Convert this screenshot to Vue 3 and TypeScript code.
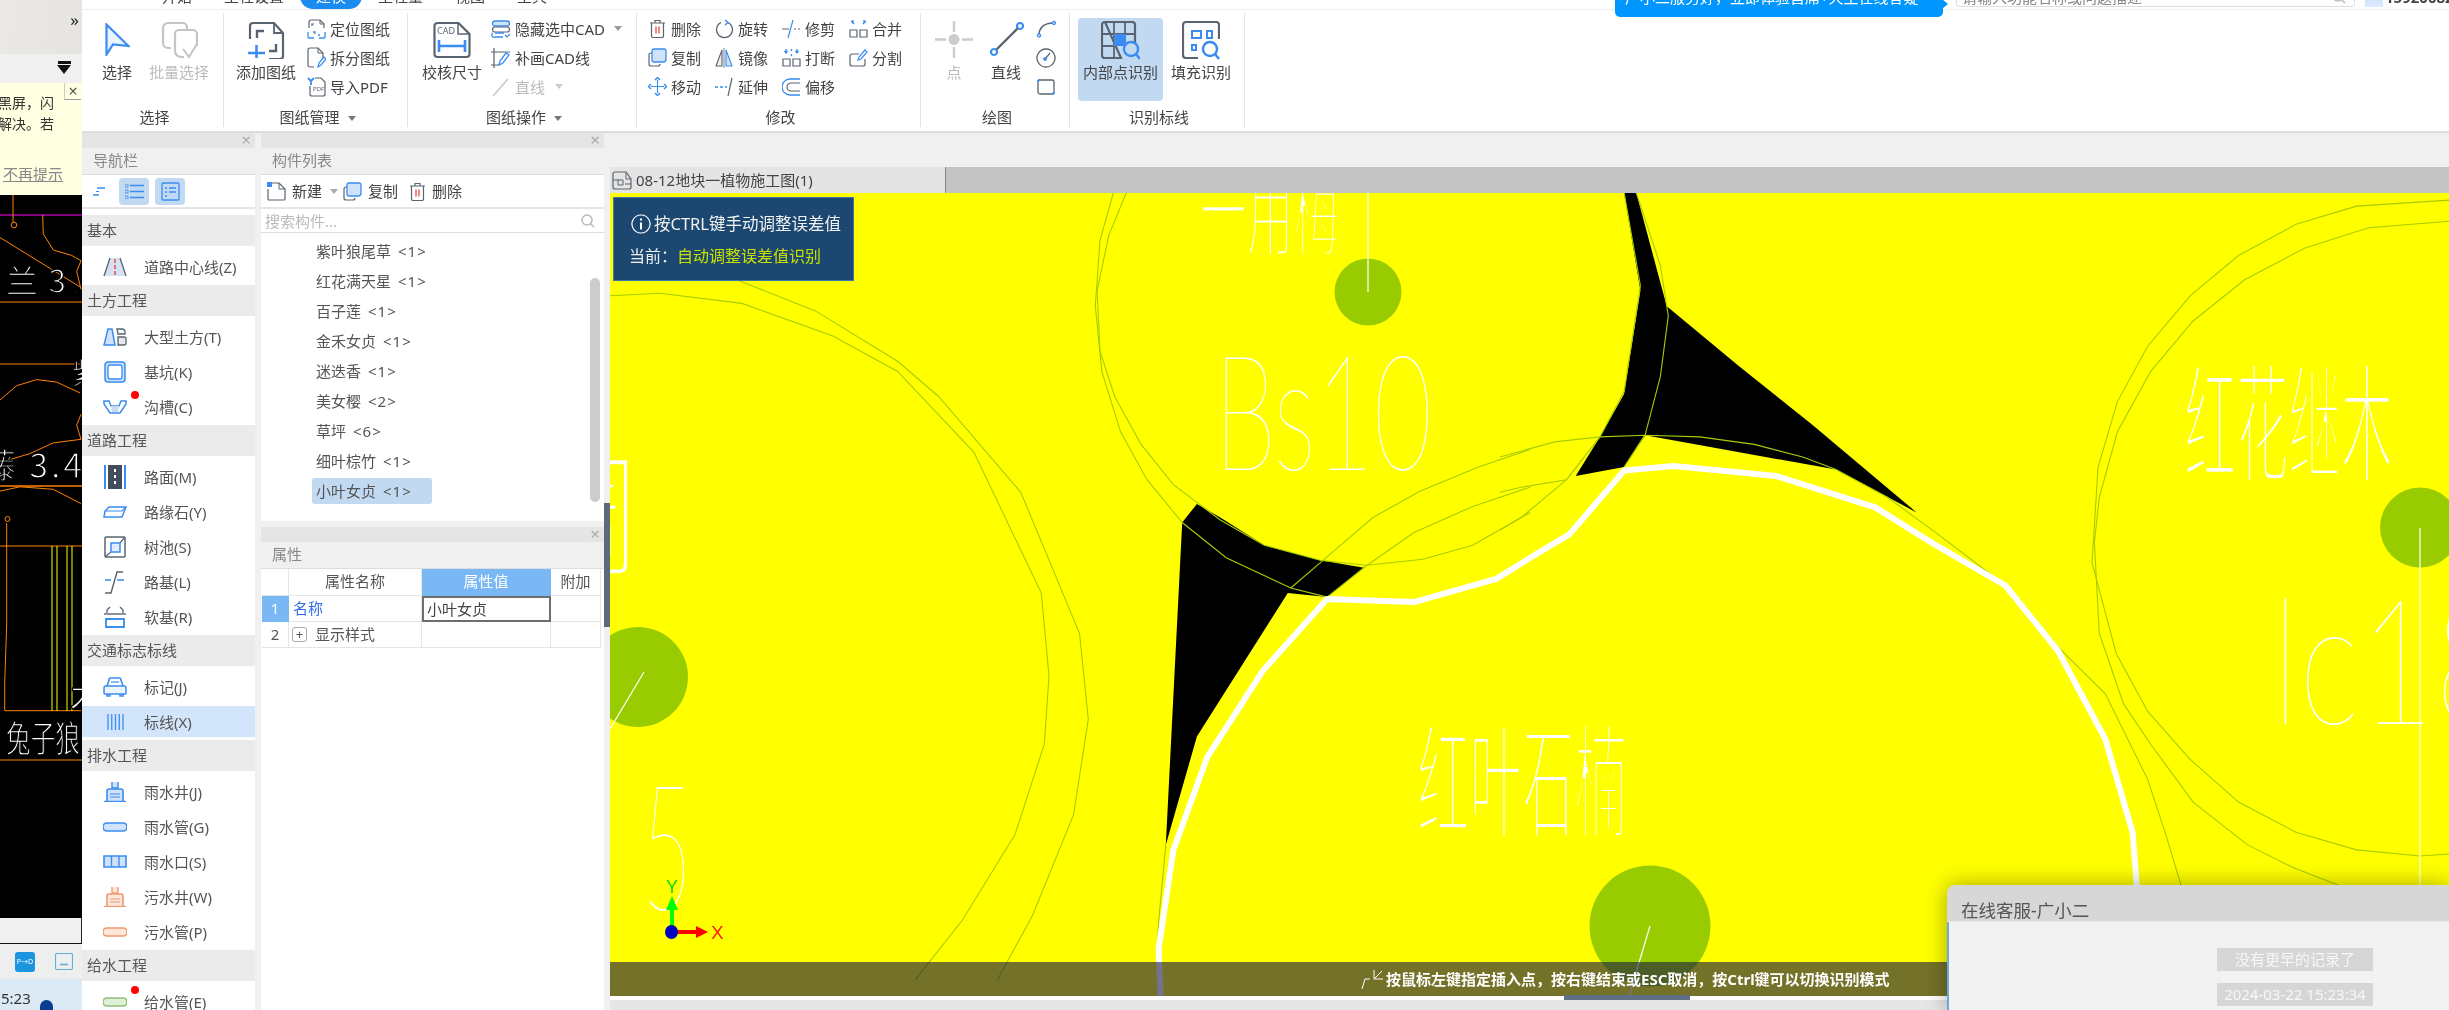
<script setup lang="ts">
import { h } from 'vue'

type Part = { d?: string; s?: string; f?: string; w?: number; t?: string; x?: number; y?: number; z?: number }
type Icon = { w: number; h: number; p: Part[] }

const B = '#3b8cf0'
const D = '#5a6470'
const L = '#cfe2fa'
const R = '#e8584a'
const O = '#ee9a72'
const GN = '#8fc07a'
const GY = '#c4c4c4'

const well = (c: string, fill: string): Icon => ({ w: 24, h: 20, p: [
  { d: 'M9 0v6h6V0', s: c, f: fill, w: 1.4 },
  { d: 'M4 19V9a2 2 0 0 1 2-2h12a2 2 0 0 1 2 2v10', s: c, f: fill, w: 1.6 },
  { d: 'M7 12h10M7 15h10', s: c, w: 1.2 },
  { d: 'M1 19.5h22', s: c, w: 1.4 },
] })
const pipe = (c: string, fill: string): Icon => ({ w: 24, h: 10, p: [
  { d: 'M4 1h16a3.500 3.500 0 0 1 0 8H4a3.500 3.500 0 0 1 0-8z', s: c, f: fill, w: 1.6 },
] })

const icons: Record<string, Icon> = {
  select: { w: 25, h: 33, p: [{ d: 'M1.500 1.500L23.500 23L8 21.500L1.500 31.500Z', s: B, f: '#eaf3fe', w: 2.2 }] },
  batch: { w: 37, h: 38, p: [
    { d: 'M10 27H7a5 5 0 0 1-5-5V7a5 5 0 0 1 5-5h15a4 4 0 0 1 4 4v3', s: GY, w: 2.2 },
    { d: 'M14 30V13a4 4 0 0 1 4-4h14a4 4 0 0 1 4 4v12', s: GY, w: 2.2 },
    { d: 'M14 30a6 6 0 0 0 6 6h3', s: GY, w: 2.2 },
    { d: 'M22 28l6 8 8-13', s: GY, w: 2 },
  ] },
  add: { w: 38, h: 38, p: [
    { d: 'M3 18V5a3 3 0 0 1 3-3h21l9 10v23a3 3 0 0 1-3 3H22', s: D, w: 2.2 },
    { d: 'M27 2v10h9', s: D, w: 1.8 },
    { d: 'M10 17V10h7M29 23v7h-7', s: D, w: 2.4 },
    { d: 'M1 32H18M9.500 24v13', s: B, w: 2.6 },
  ] },
  cad: { w: 38, h: 38, p: [
    { d: 'M1.500 33V5a3 3 0 0 1 3-3h21l11 11v20a3 3 0 0 1-3 3h-29a3 3 0 0 1-3-3z', s: D, w: 2.2 },
    { d: 'M25 2v11h11', s: D, w: 1.5 },
    { t: 'CAD', x: 4, y: 13, z: 9, f: '#5a6470' },
    { d: 'M6 19v12M32 19v12M6 25h26', s: B, w: 2.6 },
  ] },
  loc: { w: 19, h: 20, p: [
    { d: 'M2 9V3a2 2 0 0 1 2-2h9l4 4v4', s: D, w: 1.2 },
    { d: 'M13 1v4h4', s: D, w: 1 },
    { d: 'M7 5H5v2M15 11', s: D, w: 1.2 },
    { d: 'M1 13v5a1 1 0 0 0 1 1h5M18 13v5a1 1 0 0 1-1 1h-5M6 13h2v2M13 16h-2', s: B, w: 1.3 },
  ] },
  split: { w: 19, h: 21, p: [
    { d: 'M7 20H3a2 2 0 0 1-2-2V3a2 2 0 0 1 2-2h8l5 5v5', s: D, w: 1.2 },
    { d: 'M11 1v5h5', s: D, w: 1 },
    { d: 'M11 20l1-4 5-6 2 2-5 6z', s: B, w: 1.2 },
  ] },
  pdf: { w: 19, h: 20, p: [
    { d: 'M3 9v8a2 2 0 0 0 2 2h11a2 2 0 0 0 2-2V5l-4-4H8', s: D, w: 1.2 },
    { d: 'M1 1l3 3M7 1L4 4M4 4v4', s: B, w: 1.8 },
    { t: 'PDF', x: 6, y: 13.500, z: 6, f: '#5a6470' },
  ] },
  hide: { w: 20, h: 18, p: [
    { d: 'M4 1h12a2 2 0 0 1 0 5H4a2 2 0 0 1 0-5z', s: B, f: L, w: 1.3 },
    { d: 'M4 7h12a2 2 0 0 1 0 5H4a2 2 0 0 1 0-5z', s: D, w: 1.2 },
    { d: 'M4 13h9M2 13a2 2 0 0 0 2 4h8', s: B, w: 1.3 },
    { d: 'M14 15l2 2 3-3', s: B, w: 1.2 },
  ] },
  patch: { w: 20, h: 20, p: [
    { d: 'M0 4h19M3 0v20M0 17h8', s: D, w: 1.2 },
    { d: 'M8 17l1-4 6-8 3 2-6 8z', s: B, w: 1.3 },
  ] },
  line0: { w: 18, h: 20, p: [{ d: 'M1 19L16 2', s: '#ccc', w: 1.8 }] },
  del: { w: 17, h: 19, p: [
    { d: 'M1 4h15M6 4V1.500h5V4', s: D, w: 1.2 },
    { d: 'M2.500 4v13a1.500 1.500 0 0 0 1.500 1.500h9a1.500 1.500 0 0 0 1.500-1.500V4', s: D, w: 1.2 },
    { d: 'M7 7.500v7M10 7.500v7', s: R, w: 1.4 },
  ] },
  copy: { w: 19, h: 19, p: [
    { d: 'M4 5H3a2 2 0 0 0-2 2v9a2 2 0 0 0 2 2h7a2 2 0 0 0 2-2', s: D, w: 1.2 },
    { d: 'M6 1h10a2 2 0 0 1 2 2v8a3 3 0 0 1-3 3H6a2 2 0 0 1-2-2V3a2 2 0 0 1 2-2z', s: B, f: L, w: 1.3 },
  ] },
  move: { w: 19, h: 19, p: [
    { d: 'M9.500 3v13M3 9.500h13', s: B, w: 1.1 },
    { d: 'M7 3l2.500-2.500L12 3M7 16l2.500 2.500L12 16M3 7L.5 9.500 3 12M16 7l2.500 2.500L16 12', s: B, w: 1.5 },
  ] },
  rotate: { w: 19, h: 20, p: [
    { d: 'M6 3.500A8 8 0 1 0 13 3.500', s: D, w: 1.2 },
    { d: 'M10 1l3 2.500-3 2.500', s: B, w: 1.4 },
  ] },
  mirror: { w: 18, h: 20, p: [
    { d: 'M7 2L1 18h6z', s: D, f: '#eee', w: 1.1 },
    { d: 'M11 2l6 16h-6z', s: B, f: L, w: 1.1 },
    { d: 'M9 0v20', s: D, w: .8 },
  ] },
  extend: { w: 19, h: 20, p: [
    { d: 'M0 10h3M5 10h3M10 10h2', s: B, w: 1.3 },
    { d: 'M17 1L13 19', s: D, w: 1.2 },
  ] },
  trim: { w: 19, h: 20, p: [
    { d: 'M0 10h7M12 10h2M16 10h2', s: D, w: 1.2 },
    { d: 'M11 1L6 19', s: B, w: 1.2 },
  ] },
  breakI: { w: 19, h: 19, p: [
    { d: 'M1 11h7v7H1zM11 11h7v7h-7z', s: D, w: 1.2 },
    { d: 'M4 1v3M2.500 3l1.500 2 1.500-2M15 1v3M13.500 3l1.500 2 1.500-2M9.500 1v2M9.500 6v2', s: B, w: 1.3 },
  ] },
  offset: { w: 19, h: 18, p: [
    { d: 'M18 1H8a8 8 0 0 0 0 16h10', s: B, w: 1.3 },
    { d: 'M18 5H9a4 4 0 0 0 0 8h9', s: D, w: 1.2 },
  ] },
  merge: { w: 19, h: 19, p: [
    { d: 'M1 11h7v7H1zM11 11h7v7h-7z', s: D, w: 1.2 },
    { d: 'M4 1v3M3 3l2 2M15 1v3M16 3l-2 2M3 5M2 2l2 2M17 2l-2 2', s: B, w: 1.4 },
  ] },
  divide: { w: 19, h: 18, p: [
    { d: 'M10 5H3a2 2 0 0 0-2 2v8a2 2 0 0 0 2 2h11a2 2 0 0 0 2-2v-5', s: D, w: 1.2 },
    { d: 'M9 11l1-3 6-7 2 2-6 7z', s: B, w: 1.2 },
  ] },
  point: { w: 38, h: 37, p: [
    { d: 'M19 0v11M19 26v11M0 18.500h11M27 18.500h11', s: '#ccc', w: 2.4 },
    { d: 'M19 13a5.500 5.500 0 1 0 .01 0z', f: '#ccc' },
  ] },
  line: { w: 35, h: 35, p: [
    { d: 'M5 30L31 4', s: D, w: 2.4 },
    { d: 'M5 27a3 3 0 1 0 .01 0zM31 1a3 3 0 1 0 .01 0z', s: B, f: '#fff', w: 2.2 },
  ] },
  arc: { w: 20, h: 18, p: [
    { d: 'M3 15C3 8 8 3 17 3', s: D, w: 1.4 },
    { d: 'M3 14a1.500 1.500 0 1 0 .01 0zM18 1.500a1.500 1.500 0 1 0 .01 0z', s: B, f: '#fff', w: 1.4 },
  ] },
  gauge: { w: 20, h: 20, p: [
    { d: 'M10 1a9 9 0 1 0 .01 0z', s: D, w: 1.3 },
    { d: 'M9 11l5-6', s: D, w: 1.2 },
    { d: 'M9 9.500a1.500 1.500 0 1 0 .01 0z', s: B, f: B },
  ] },
  rrect: { w: 18, h: 16, p: [
    { d: 'M3 1h12a2 2 0 0 1 2 2v10a2 2 0 0 1-2 2H3a2 2 0 0 1-2-2V3a2 2 0 0 1 2-2z', s: D, w: 1.3 },
    { d: 'M1 3a2 2 0 0 1 2-2M15 15a2 2 0 0 0 2-2', s: B, w: 2 },
  ] },
  inner: { w: 39, h: 39, p: [
    { d: 'M4 1h27a3 3 0 0 1 3 3v22M20 37H4a3 3 0 0 1-3-3V4a3 3 0 0 1 3-3z', s: D, w: 2.2 },
    { d: 'M13 1v36M24 1v11M1 13h33M1 25h11', s: D, w: 1.8 },
    { d: 'M13 13h12v12H13z', f: B },
    { d: 'M30 21a7 7 0 1 0 .01 0z', s: B, f: '#c2d9f2', w: 2.4 },
    { d: 'M35 33l4 5', s: B, w: 2.6 },
  ] },
  fill: { w: 38, h: 39, p: [
    { d: 'M16 37H4a3 3 0 0 1-3-3V4a3 3 0 0 1 3-3h30a3 3 0 0 1 3 3v14', s: D, w: 2.2 },
    { d: 'M10 10h9v7h-9zM25 10h5v7h-5zM10 24h4v5h-4z', s: B, w: 2 },
    { d: 'M28 21a7 7 0 1 0 .01 0z', s: B, w: 2.4 },
    { d: 'M33 33l4 5', s: B, w: 2.6 },
  ] },
  road: { w: 24, h: 20, p: [
    { d: 'M7 1L1 19H23L17 1Z', f: '#d5e2f3' },
    { d: 'M7 1L1 19M17 1L23 19', s: D, w: 1.3 },
    { d: 'M12 2v4M12 8v4M12 14v4', s: R, w: 1.6 },
  ] },
  earth: { w: 24, h: 20, p: [
    { d: 'M5 2h4l3 16H1z', s: B, f: L, w: 1.5 },
    { d: 'M14 2h5a3 3 0 0 1 3 3v2h-7z', s: D, f: '#fff', w: 1.3 },
    { d: 'M15 10h6a2 2 0 0 1 2 2v4a2 2 0 0 1-2 2h-6z', s: D, f: '#e8e8e8', w: 1.3 },
  ] },
  pit: { w: 22, h: 22, p: [
    { d: 'M4 1h14a3 3 0 0 1 3 3v14a3 3 0 0 1-3 3H4a3 3 0 0 1-3-3V4a3 3 0 0 1 3-3z', s: B, f: L, w: 1.5 },
    { d: 'M6 4h10a2 2 0 0 1 2 2v10a2 2 0 0 1-2 2H6a2 2 0 0 1-2-2V6a2 2 0 0 1 2-2z', s: B, f: '#fff', w: 1.3 },
  ] },
  ditch: { w: 24, h: 14, p: [
    { d: 'M1 1h5l2 5h8l2-5h5v3l-6 9H7L1 4z', s: B, f: '#fff', w: 1.5 },
    { d: 'M8 6h8l-1 6H9z', f: '#c7dbf5' },
  ] },
  pave: { w: 22, h: 24, p: [
    { d: 'M1 0v24M21 0v24', s: B, w: 2 },
    { d: 'M4 0h14v24H4z', f: '#444c5c' },
    { d: 'M11 4v3M11 10v3M11 16v3', s: '#fff', w: 2 },
  ] },
  curb: { w: 24, h: 12, p: [
    { d: 'M6 1h17l-4 10H1l1-6z', s: B, f: '#fff', w: 1.5 },
    { d: 'M2 5h17l4-4', s: B, w: 1.2 },
  ] },
  tree: { w: 22, h: 24, p: [
    { d: 'M2 2h18a1 1 0 0 1 1 1v18a1 1 0 0 1-1 1H2a1 1 0 0 1-1-1V3a1 1 0 0 1 1-1z', s: D, f: '#fff', w: 1.5 },
    { d: 'M1 22l6-5M21 2l-5 6', s: D, w: 1.2 },
    { d: 'M7 8h9v9H7z', s: B, f: '#e3eefc', w: 1.5 },
  ] },
  sub: { w: 22, h: 24, p: [
    { d: 'M1 10h6M13 10h7', s: B, w: 1.4 },
    { d: 'M1 23h6l6-21h6', s: D, w: 1.4 },
  ] },
  soft: { w: 22, h: 22, p: [
    { d: 'M3 7V4l3-3M19 7V4l-3-3', s: D, w: 1.3 },
    { d: 'M0 8h22', s: D, w: 1.4 },
    { d: 'M2 13h18v8H2z', s: B, w: 1.8 },
  ] },
  car: { w: 24, h: 20, p: [
    { d: 'M4 9l2-6a2 2 0 0 1 2-2h8a2 2 0 0 1 2 2l2 6', s: B, w: 1.6 },
    { d: 'M3 9h18a2 2 0 0 1 2 2v5a1 1 0 0 1-1 1H2a1 1 0 0 1-1-1v-5a2 2 0 0 1 2-2z', s: B, f: '#eef5fe', w: 1.5 },
    { d: 'M8 5h8', s: B, w: 1.2 },
    { d: 'M4 17v2h3v-2M17 17v2h3v-2', s: B, w: 1.5 },
    { d: 'M6 12.500h.1M18 12.500h.1', s: B, w: 2.6 },
  ] },
  mark: { w: 17, h: 16, p: [{ d: 'M1 0v16M4.750 0v16M8.500 0v16M12.250 0v16M16 0v16', s: B, w: 1.3 }] },
  well: well(B, L),
  swell: well(O, '#fde6da'),
  pipe: pipe(B, L),
  spipe: pipe(O, '#fde6da'),
  gpipe: pipe(GN, '#dff0d6'),
  inlet: { w: 24, h: 13, p: [
    { d: 'M1 1h22v11H1z', s: B, f: L, w: 1.6 },
    { d: 'M8.500 1v11M16 1v11', s: B, w: 1.3 },
  ] },
  collapse: { w: 12, h: 9, p: [{ d: 'M4 1h8M0 8h6', s: B, w: 1.5 }, { d: 'M3 4.500h3', s: B, w: 1 }] },
  list: { w: 19, h: 15, p: [{ d: 'M5 1.500h14M5 7.500h14M5 13.500h14', s: B, w: 1.5 }, { d: 'M0 0h3v3H0zM0 6h3v3H0zM0 12h3v3H0z', s: B, w: .8 }] },
  form: { w: 19, h: 19, p: [
    { d: 'M2 1h15a1 1 0 0 1 1 1v15a1 1 0 0 1-1 1H2a1 1 0 0 1-1-1V2a1 1 0 0 1 1-1z', s: B, w: 1.3 },
    { d: 'M4 6h2M8 6h7M4 10h2M8 10h7M4 14h2', s: B, w: 1.4 },
  ] },
  fnew: { w: 19, h: 19, p: [
    { d: 'M5 1h7l6 6v10a1 1 0 0 1-1 1H2a1 1 0 0 1-1-1V7', s: D, w: 1.2 },
    { d: 'M12 1v6h6', s: D, w: 1 },
    { d: 'M0 0h5v5H0z', f: B },
  ] },
  doc: { w: 18, h: 17, p: [
    { d: 'M2 .5h14a1.500 1.500 0 0 1 1.500 1.500v13a1.500 1.500 0 0 1-1.500 1.500H2A1.500 1.500 0 0 1 .5 15V2A1.500 1.500 0 0 1 2 .5z', s: '#5db0d8', w: 1.2 },
    { d: 'M5 11.500h8', s: '#5db0d8', w: 1.6 },
  ] },
  tab: { w: 20, h: 19, p: [
    { d: 'M8 1H3a2 2 0 0 0-2 2v13a2 2 0 0 0 2 2h14a2 2 0 0 0 2-2V8l-5-7H8', s: D, w: 1.2 },
    { d: 'M14 1v7h5M1 9h6M13 13h6', s: D, w: 1 },
    { d: 'M6 9h5v5H6z', s: D, w: 1 },
  ] },
  mag: { w: 14, h: 14, p: [{ d: 'M6 1a5 5 0 1 0 .01 0z', s: '#bbb', w: 1.5 }, { d: 'M9.500 9.500L13 13', s: '#bbb', w: 1.5 }] },
  pin: { w: 23, h: 19, p: [
    { d: 'M9 9H4L1 19', s: '#fff', w: 1 },
    { d: 'M21 1L14 8M13 0v9h9', s: '#fff', w: 1 },
  ] },
  info: { w: 20, h: 20, p: [
    { d: 'M10 1a9 9 0 1 0 .01 0z', s: '#fff', w: 1.2 },
    { d: 'M10 8.500v7', s: '#fff', w: 2 },
    { d: 'M10 4.500v2', s: '#fff', w: 2 },
  ] },
}

const Ico = (props: { n: string }) => {
  const ic = icons[props.n]
  return h('svg', { width: ic.w, height: ic.h, viewBox: `0 0 ${ic.w} ${ic.h}`, class: 'ico' },
    ic.p.map((q) => q.t
      ? h('text', { x: q.x, y: q.y, 'font-size': q.z, fill: q.f, 'font-family': 'Noto Sans, sans-serif' }, q.t)
      : h('path', { d: q.d, stroke: q.s ?? 'none', fill: q.f ?? 'none', 'stroke-width': q.w ?? 1 })))
}
Ico.props = ['n']

const tabs = ['开始', '工程设置', '建模', '工程量', '视图', '工具']

const smallDraw = [
  { n: 'loc', t: '定位图纸' }, { n: 'split', t: '拆分图纸' }, { n: 'pdf', t: '导入PDF' },
]
const smallModify = [
  { n: 'del', t: '删除' }, { n: 'rotate', t: '旋转' }, { n: 'trim', t: '修剪' }, { n: 'merge', t: '合并' },
  { n: 'copy', t: '复制' }, { n: 'mirror', t: '镜像' }, { n: 'breakI', t: '打断' }, { n: 'divide', t: '分割' },
  { n: 'move', t: '移动' }, { n: 'extend', t: '延伸' }, { n: 'offset', t: '偏移' },
]

const nav = [
  { title: '基本', items: [{ t: '道路中心线(Z)', n: 'road' }] },
  { title: '土方工程', items: [{ t: '大型土方(T)', n: 'earth' }, { t: '基坑(K)', n: 'pit' }, { t: '沟槽(C)', n: 'ditch', dot: true }] },
  { title: '道路工程', items: [{ t: '路面(M)', n: 'pave' }, { t: '路缘石(Y)', n: 'curb' }, { t: '树池(S)', n: 'tree' }, { t: '路基(L)', n: 'sub' }, { t: '软基(R)', n: 'soft' }] },
  { title: '交通标志标线', items: [{ t: '标记(J)', n: 'car' }, { t: '标线(X)', n: 'mark', active: true }] },
  { title: '排水工程', items: [{ t: '雨水井(J)', n: 'well' }, { t: '雨水管(G)', n: 'pipe' }, { t: '雨水口(S)', n: 'inlet' }, { t: '污水井(W)', n: 'swell' }, { t: '污水管(P)', n: 'spipe' }] },
  { title: '给水工程', items: [{ t: '给水管(E)', n: 'gpipe', dot: true }] },
]

const comps = [
  ['紫叶狼尾草', '<1>'], ['红花满天星', '<1>'], ['百子莲', '<1>'], ['金禾女贞', '<1>'], ['迷迭香', '<1>'],
  ['美女樱', '<2>'], ['草坪', '<6>'], ['细叶棕竹', '<1>'], ['小叶女贞', '<1>'],
]

const conv = (s: string, ox: number, sx: number, oy: number, sy: number) =>
  s.trim().split(/\s+/).map((pr) => {
    const [x, y] = pr.split(',').map(Number)
    return `${(ox + x / sx).toFixed(1)},${(oy + y / sy).toFixed(1)}`
  }).join(' ')
const p8 = (s: string) => conv(s, 610, 1.704, 190, 1.985)
const p9 = (s: string) => conv(s, 1500, 1.652, 190, 1.985)
const p10 = (s: string) => conv(s, 0, 3, 200, 2.8)

const blackShapes = [
  p8('1000,623 975,660 947,1300 1000,1085 1155,800 1222,808 1285,750 1210,735 1115,705 1040,650'),
  p9('205,5 225,5 272,215 275,230 395,350 515,465 688,640 555,555 240,487 205,550 125,568 165,490 205,405 232,200'),
]
const greens = [
  p8('0,210 85,205 225,225 380,290 490,360 620,520 735,800 748,965 740,1100 690,1280 600,1450 520,1568'),
  p8('220,180 350,240 490,340 560,410 700,600 800,880 815,1050 790,1240 720,1440 660,1568'),
  p8('858,5 835,100 827,230 838,360 870,480 915,575 975,660 1050,730 1160,790 1222,808'),
  p8('880,5 850,90 830,200 835,320 860,410 905,505 960,585 1040,655 1115,705 1210,735 1290,745 1385,733 1470,705 1568,640'),
  p8('1160,790 1215,735 1300,650 1380,598 1480,550 1568,515'),
  p8('1222,808 1290,745 1370,680 1470,628 1568,590'),
  p8('947,1300 935,1450 933,1500'),
  p9('0,530 90,500 165,490 240,487 330,490 420,505 500,530 555,555 640,610 720,680 835,785 860,815 920,905 1000,1000 1070,1170 1100,1280 1125,1380'),
  p9('0,600 35,590 110,575 165,490 205,400 232,190 205,5'),
  p9('0,675 35,650 110,575'),
  p9('225,5 265,150 278,250 265,370 240,485 205,550'),
  p9('1568,20 1415,32 1315,68 1220,130 1140,210 1070,310 1020,420 988,550 978,740 1018,920 1070,1035 1140,1130 1220,1215 1315,1275 1415,1310 1520,1322 1568,1318'),
  p9('1568,62 1435,75 1330,115 1230,178 1145,260 1075,360 1020,480 990,610 982,700 990,880 1030,1020 1075,1100 1145,1215 1235,1300 1310,1345 1385,1380'),
]
const thick = p8('938,1600 935,1505 960,1310 1018,1125 1112,955 1222,812 1370,818 1510,772 1568,730') + ' ' +
  p9('115,683 205,557 287,548 457,568 620,630 720,705 835,785 922,915 1000,1090 1045,1275 1052,1380')

const cadOrange = [
  p10('128,42 130,95 160,140 215,155 243,170 230,200 243,250'),
  p10('0,105 243,245'),
  p10('0,560 50,520 110,503 170,510 240,540'),
  p10('243,600 230,630 243,670 160,680 90,710 0,735'),
  p10('0,815 60,803 160,810 243,850'),
  p10('20,905 20,1190 14,1350 14,1430 243,1430'),
]
</script>

<template>
  <div class="app">
    <aside class="strip">
      <div class="strip-top"><span class="chev">»</span></div>
      <div class="strip-filter"><span class="filter-bar"></span><span class="filter-tri"></span></div>
      <div class="note">
        <span class="note-x">×</span>
        <p class="note-line">黑屏，闪</p>
        <p class="note-line">解决。若</p>
        <a class="note-link">不再提示</a>
      </div>
      <svg class="cad-left" width="82" height="723" viewBox="0 195 82 723">
        <line x1="0" y1="215" x2="82" y2="215" stroke="#ff00ff" stroke-width="1.200" />
        <line x1="13" y1="195" x2="13" y2="222" stroke="#ff8000" />
        <circle cx="14" cy="225" r="2.800" fill="none" stroke="#ff8000" />
        <line x1="0" y1="302" x2="82" y2="302" stroke="#ff8000" />
        <line x1="0" y1="364" x2="82" y2="364" stroke="#ff8000" />
        <line x1="0" y1="486" x2="82" y2="486" stroke="#ff8000" stroke-width="1.300" />
        <line x1="0" y1="546" x2="82" y2="546" stroke="#ff8000" />
        <circle cx="7.500" cy="519" r="2.500" fill="none" stroke="#ff8000" />
        <polyline v-for="(o, i) in cadOrange" :key="i" :points="o" fill="none" stroke="#ff8000" />
        <line v-for="x in [52, 57, 67, 72]" :key="x" :x1="x" y1="546" :x2="x" y2="711" stroke="#ffff00" />
        <text class="cad-w" x="6" y="293" font-size="32" textLength="60" lengthAdjust="spacing">兰 3</text>
        <text class="cad-w" x="74" y="293" font-size="14">.</text>
        <text class="cad-w" x="-18" y="478" font-size="34" textLength="100" lengthAdjust="spacing">藤 3.4</text>
        <text class="cad-w" x="72" y="384" font-size="30">紫</text>
        <text class="cad-w" x="70" y="710" font-size="36">木</text>
        <text class="cad-w" x="6" y="752" font-size="36" textLength="74" lengthAdjust="spacingAndGlyphs">兔子狼</text>
        <line x1="0" y1="760" x2="82" y2="760" stroke="#ff8000" />
      </svg>
      <div class="strip-panel"></div>
      <div class="strip-tools">
        <span class="pd">P→D</span>
        <Ico n="doc" />
      </div>
      <div class="strip-status"><span>5:23</span><i class="blob"></i></div>
    </aside>

    <main class="main">
      <header class="topbar">
        <span v-for="t in tabs" :key="t" class="tab" :class="{ on: t === '建模' }">{{ t }}</span>
        <div class="top-right">
          <div class="search-top"><span>请输入功能名称或问题描述</span><Ico n="mag" /></div>
          <i class="avatar"></i>
          <b class="user">15920082</b>
        </div>
      </header>

      <section class="ribbon">
        <div class="rg rg1">
          <div class="rb">
            <div class="big"><span class="big-ic"><Ico n="select" /></span><span>选择</span></div>
            <div class="big off"><span class="big-ic"><Ico n="batch" /></span><span>批量选择</span></div>
          </div>
          <div class="rl">选择</div>
        </div>
        <div class="rg rg2">
          <div class="rb">
            <div class="big"><span class="big-ic"><Ico n="add" /></span><span>添加图纸</span></div>
            <div class="smalls">
              <div v-for="s in smallDraw" :key="s.t" class="small"><span class="s-ic"><Ico :n="s.n" /></span>{{ s.t }}</div>
            </div>
          </div>
          <div class="rl">图纸管理<i class="caret"></i></div>
        </div>
        <div class="rg rg3">
          <div class="rb">
            <div class="big"><span class="big-ic"><Ico n="cad" /></span><span>校核尺寸</span></div>
            <div class="smalls">
              <div class="small"><span class="s-ic"><Ico n="hide" /></span>隐藏选中CAD<i class="caret c2"></i></div>
              <div class="small"><span class="s-ic"><Ico n="patch" /></span>补画CAD线</div>
              <div class="small off"><span class="s-ic"><Ico n="line0" /></span>直线<i class="caret c3"></i></div>
            </div>
          </div>
          <div class="rl">图纸操作<i class="caret"></i></div>
        </div>
        <div class="rg rg4">
          <div class="rb">
            <div class="mod-grid">
              <div v-for="s in smallModify" :key="s.t" class="small"><span class="s-ic"><Ico :n="s.n" /></span>{{ s.t }}</div>
            </div>
          </div>
          <div class="rl">修改</div>
        </div>
        <div class="rg rg5">
          <div class="rb">
            <div class="big nar off"><span class="big-ic"><Ico n="point" /></span><span>点</span></div>
            <div class="big nar"><span class="big-ic"><Ico n="line" /></span><span>直线</span></div>
            <div class="ic-col">
              <span class="s-row"><Ico n="arc" /></span>
              <span class="s-row"><Ico n="gauge" /></span>
              <span class="s-row"><Ico n="rrect" /></span>
            </div>
          </div>
          <div class="rl">绘图</div>
        </div>
        <div class="rg rg6">
          <div class="rb">
            <div class="big act"><span class="big-ic"><Ico n="inner" /></span><span>内部点识别</span></div>
            <div class="big fillb"><span class="big-ic"><Ico n="fill" /></span><span>填充识别</span></div>
          </div>
          <div class="rl">识别标线</div>
        </div>
      </section>

      <section class="work">
        <nav class="panel nav">
          <div class="p-head"><span class="p-x">×</span></div>
          <div class="p-title">导航栏</div>
          <div class="nav-tools">
            <span class="nt first"><Ico n="collapse" /></span>
            <span class="nt on"><Ico n="list" /></span>
            <span class="nt on"><Ico n="form" /></span>
          </div>
          <div class="nav-scroll">
            <template v-for="g in nav" :key="g.title">
              <div class="ng">{{ g.title }}</div>
              <div class="ng-list">
                <div v-for="it in g.items" :key="it.t" class="ni" :class="{ on: it.active }">
                  <span class="ni-ic"><Ico :n="it.n" /></span>{{ it.t }}
                  <i v-if="it.dot" class="dot"></i>
                </div>
              </div>
            </template>
          </div>
        </nav>

        <div class="col2">
          <section class="panel comp">
            <div class="p-head"><span class="p-x">×</span></div>
            <div class="p-title">构件列表</div>
            <div class="comp-tools">
              <span class="ct"><Ico n="fnew" />新建<i class="caret c4"></i></span>
              <span class="ct"><Ico n="copy" />复制</span>
              <span class="ct"><Ico n="del" />删除</span>
            </div>
            <div class="comp-search"><span>搜索构件...</span><Ico n="mag" /></div>
            <div class="comp-list">
              <div v-for="c in comps" :key="c[0]" class="ci" :class="{ on: c[0] === '小叶女贞' }">{{ c[0] }}<span class="ci-n">{{ c[1] }}</span></div>
              <i class="sb"></i>
            </div>
          </section>
          <section class="panel prop">
            <div class="p-head"><span class="p-x">×</span></div>
            <div class="p-title">属性</div>
            <div class="ptable">
              <div class="c"></div>
              <div class="c mid">属性名称</div>
              <div class="c mid hl">属性值</div>
              <div class="c mid">附加</div>
              <div class="c mid hl">1</div>
              <div class="c name">名称</div>
              <div class="c val">小叶女贞</div>
              <div class="c"></div>
              <div class="c mid">2</div>
              <div class="c expand"><i class="plus">+</i>显示样式</div>
              <div class="c"></div>
              <div class="c"></div>
            </div>
          </section>
        </div>

        <div class="splitter"><i></i></div>

        <div class="stage">
          <div class="stage-band"></div>
          <div class="stage-tabs">
            <div class="stab"><Ico n="tab" /><span>08-12地块一植物施工图(1)</span></div>
          </div>
          <div class="canvas">
            <svg class="cv" width="1839" height="803" viewBox="610 193 1839 803">
              <rect x="610" y="193" width="1839" height="803" fill="#ffff00" />
              <circle cx="1368" cy="292" r="33.500" fill="#99cc00" />
              <circle cx="638" cy="677" r="50" fill="#99cc00" />
              <circle cx="1650" cy="926" r="60.500" fill="#99cc00" />
              <circle cx="2420" cy="527.500" r="40" fill="#99cc00" />
              <polygon v-for="(b, i) in blackShapes" :key="i" :points="b" fill="#000" />
              <polyline v-for="(g, i) in greens" :key="'g' + i" :points="g" fill="none" stroke="#a6cc00" stroke-width="1.100" />
              <polyline :points="thick" fill="none" stroke="#fff" stroke-width="6" stroke-linejoin="round" />
              <g stroke="#fff" stroke-width="1.200">
                <line x1="1368" y1="193" x2="1368" y2="292" />
                <line x1="644" y1="672" x2="610" y2="729" />
                <line x1="1650" y1="926" x2="1629" y2="996" />
                <line x1="2420" y1="528" x2="2420" y2="885" />
              </g>
              <text class="lat" x="1214" y="470" font-size="160" textLength="218" lengthAdjust="spacingAndGlyphs">Bs10</text>
              <text class="lat" x="642" y="910" font-size="175" textLength="50" lengthAdjust="spacingAndGlyphs">5</text>
              <text class="lat" x="2272" y="724" font-size="175" textLength="238" lengthAdjust="spacingAndGlyphs">lc18</text>
              <text class="cad-y e36" x="1200" y="248" font-size="100" textLength="140" lengthAdjust="spacingAndGlyphs">一用梅</text>
              <text class="cad-y e43" x="548" y="565" font-size="135" textLength="92" lengthAdjust="spacingAndGlyphs">周</text>
              <text class="cad-y e46" x="1417" y="828" font-size="125" textLength="210" lengthAdjust="spacingAndGlyphs">红叶石楠</text>
              <text class="cad-y e46" x="2184" y="472" font-size="130" textLength="209" lengthAdjust="spacingAndGlyphs">红花继木</text>
              <g>
                <line x1="672" y1="932" x2="672" y2="905" stroke="#00ff00" stroke-width="4" />
                <polygon points="672,896 666,910 678,910" fill="#00ff00" />
                <line x1="672" y1="932" x2="698" y2="932" stroke="#ff0000" stroke-width="4" />
                <polygon points="708,932 696,926 696,938" fill="#ff0000" />
                <ellipse cx="671.500" cy="932" rx="6.500" ry="7" fill="#0000c0" />
                <text x="666" y="893" font-size="18" fill="#00e000" class="axis">Y</text>
                <text x="711" y="939" font-size="19" fill="#ff2000" class="axis">X</text>
              </g>
            </svg>
            <div class="tip">
              <div class="tip-1"><Ico n="info" /><span>按CTRL键手动调整误差值</span></div>
              <div class="tip-2">当前：<em>自动调整误差值识别</em></div>
            </div>
            <div class="hint"><Ico n="pin" /><span>按鼠标左键指定插入点，按右键结束或ESC取消，按Ctrl键可以切换识别模式</span></div>
          </div>
          <div class="gutter"></div>
          <div class="hscroll"><i class="thumb"></i></div>
        </div>
      </section>
    </main>

    <div class="bubble">广小二服务好，立即体验首席+天王在线答疑</div>

    <aside class="chat">
      <div class="chat-title">在线客服-广小二</div>
      <div class="chat-body">
        <span class="pill">没有更早的记录了</span>
        <span class="pill">2024-03-22 15:23:34</span>
      </div>
    </aside>
  </div>
</template>

<style>
html, body { margin: 0; overflow: hidden; background: #fff; }
</style>

<style scoped>
.app {
  position: relative;
  width: 2449px;
  height: 1010px;
  display: flex;
  overflow: hidden;
  background: #fff;
  color: #555;
  font-family: "Noto Sans", "Noto Sans CJK SC", sans-serif;
  font-size: 15px;
  line-height: 20px;
  filter: blur(0.45px);
}
.ico { display: block; flex: none; }
p { margin: 0; }
i, em { font-style: normal; }

.strip { width: 82px; flex: none; display: flex; flex-direction: column; background: #000; }
.strip-top { height: 54px; background: linear-gradient(100deg, #ebe9e5, #e6e4e0); position: relative; }
.chev { position: absolute; right: 3px; top: 10px; color: #222; font-size: 17px; }
.strip-filter { height: 29px; background: #f0f0f0; display: flex; flex-direction: column; align-items: flex-end; padding: 7px 11px 0 0; box-sizing: border-box; }
.filter-bar { width: 13px; height: 3px; background: #111; margin-bottom: 1px; }
.filter-tri { width: 0; height: 0; border-left: 7px solid transparent; border-right: 7px solid transparent; border-top: 9px solid #111; }
.note { height: 112px; box-sizing: border-box; background: #ffffe1; position: relative; display: flex; flex-direction: column; align-items: flex-end; padding: 9px 28px 0 0; overflow: hidden; color: #333; font-size: 14px; line-height: 21px; }
.note-line { white-space: nowrap; }
.note-x { position: absolute; top: 0; right: 1px; width: 16px; height: 16px; border-left: 1px solid #ccc; border-bottom: 1px solid #999; text-align: center; line-height: 17px; color: #555; font-size: 16px; }
.note-link { align-self: flex-start; margin: 30px 0 0 3px; color: #888; text-decoration: underline; font-size: 15px; white-space: nowrap; }
.cad-left { display: block; background: #000; flex: none; }
.cad-w { fill: #fff; font-family: "Noto Sans CJK SC", sans-serif; stroke: #000; stroke-width: 1.300px; }
.strip-panel { height: 26px; background: #f0f0f0; border-right: 1px solid #222; border-bottom: 1px solid #111; box-sizing: border-box; }
.strip-tools { height: 35px; background: #eee; display: flex; align-items: center; gap: 20px; padding-left: 15px; }
.pd { width: 20px; height: 20px; border-radius: 3px; background: #1b95e0; color: #fff; font-size: 7px; line-height: 20px; text-align: center; white-space: nowrap; }
.strip-status { flex: 1; background: #dceaf5; position: relative; color: #333; padding: 9px 0 0 1px; line-height: 20px; font-size: 15px; }
.blob { position: absolute; left: 40px; top: 21px; width: 13px; height: 16px; border-radius: 7px 7px 0 0; background: #0b3d8e; }

.main { flex: 1; min-width: 0; display: flex; flex-direction: column; }
.topbar { height: 10px; flex: none; box-sizing: border-box; border-bottom: 1px solid #eee; display: flex; align-items: flex-end; padding-left: 64px; overflow: hidden; }
.tab { height: 26px; flex: none; line-height: 26px; padding: 0 16px; border-radius: 13px; color: #444; }
.tab.on { background: #1a8cf0; color: #fff; }
.top-right { margin-left: auto; display: flex; align-items: flex-end; flex: none; }
.search-top { width: 399px; height: 20px; box-sizing: border-box; border: 1px solid #ddd; border-radius: 3px; margin: 0 10px 2px 0; display: flex; justify-content: space-between; align-items: center; padding: 0 8px 0 5px; color: #888; font-size: 15px; }
.avatar { width: 18px; height: 22px; margin: 0 2px 2px 0; background: linear-gradient(180deg, #bcdcff, #dbeaff); }
.user { height: 24px; line-height: 24px; color: #444; font-size: 15px; width: 64px; overflow: hidden; }

.bubble { position: absolute; left: 1615px; top: -10px; width: 328px; height: 27px; box-sizing: border-box; padding-left: 10px; line-height: 14px; border-radius: 5px; background: #0096ff; color: #fff; font-size: 15px; white-space: nowrap; }
.bubble::after { content: ""; position: absolute; right: -5px; top: 9px; border-left: 6px solid #0096ff; border-top: 5px solid transparent; border-bottom: 5px solid transparent; }

.ribbon { height: 123px; flex: none; box-sizing: border-box; display: flex; border-bottom: 2px solid #ddd; }
.rg { height: 114px; margin-top: 3px; box-sizing: border-box; border-right: 1px solid #e3e3e3; display: flex; flex-direction: column; }
.rg1 { width: 142px; }
.rg2 { width: 184px; }
.rg3 { width: 229px; }
.rg4 { width: 284px; }
.rg5 { width: 149px; }
.rg6 { width: 175px; }
.rb { flex: 1; display: flex; min-height: 0; }
.rl { height: 20px; flex: none; text-align: center; padding-left: 4px; color: #444; line-height: 20px; white-space: nowrap; }
.rg1 .rb { padding-left: 4px; }
.rg2 .rb { padding-left: 11px; gap: 10px; }
.rg3 .rb { padding-left: 13px; gap: 9px; }
.rg4 .rb { padding-left: 11px; }
.rg5 .rb { padding-left: 7px; }
.rg6 .rb { padding-left: 8px; gap: 8px; }
.big { width: 62px; flex: none; display: flex; flex-direction: column; align-items: center; color: #444; white-space: nowrap; }
.big-ic { height: 45px; flex: none; margin-top: 4px; display: flex; align-items: center; justify-content: center; }
.big.off { color: #bbb; }
.big.nar { width: 52px; }
.big.act { width: 85px; height: 83px; margin-top: 5px; background: #c2d9f2; border-radius: 4px; }
.big.act .big-ic { margin-top: 0; height: 44px; }
.big.fillb { width: 60px; }
.big.fillb .big-ic { margin-top: 5px; height: 44px; }
.smalls { margin-top: 1px; display: flex; flex-direction: column; }
.small { height: 29px; display: flex; align-items: center; color: #444; white-space: nowrap; }
.small.off { color: #bbb; }
.s-ic { width: 18px; flex: none; margin-right: 5px; display: flex; justify-content: center; }
.mod-grid { margin-top: 1px; display: grid; grid-template-columns: repeat(4, 67px); grid-auto-rows: 29px; }
.ic-col { margin: 1px 0 0 4px; display: flex; flex-direction: column; }
.s-row { height: 29px; display: flex; align-items: center; justify-content: center; width: 20px; }
.caret { display: inline-block; width: 0; height: 0; margin-left: 8px; vertical-align: 2px; border-left: 4.500px solid transparent; border-right: 4.500px solid transparent; border-top: 5px solid #777; }
.c2 { margin-left: 9px; border-top-color: #999; }
.c3 { margin-left: 10px; border-top-color: #ccc; }
.c4 { margin-left: 2px; border-top-color: #aaa; }

.work { flex: 1; min-height: 0; display: flex; background: #f0f0f0; }
.panel { background: #fff; display: flex; flex-direction: column; overflow: hidden; }
.p-head { height: 15px; flex: none; background: #e5e5e5; position: relative; }
.p-x { position: absolute; right: 4px; top: -3px; color: #aaa; font-size: 17px; line-height: 20px; }
.p-title { height: 27px; flex: none; box-sizing: border-box; background: #f0f0f0; border-bottom: 1px solid #ddd; color: #888; padding-left: 11px; line-height: 25px; }
.nav { width: 173px; flex: none; margin-right: 6px; }
.nav-tools { height: 34px; flex: none; box-sizing: border-box; border-bottom: 2px solid #e5e5e5; display: flex; align-items: center; padding-left: 11px; }
.nt { display: flex; align-items: center; justify-content: center; }
.nt.first { width: 12px; margin-right: 14px; }
.nt.on { width: 30px; height: 27px; background: #c2d9f2; border-radius: 4px; margin-right: 6px; }
.nav-scroll { padding-top: 6px; }
.ng { height: 31px; background: #ebebeb; padding-left: 5px; line-height: 31px; color: #555; }
.ng-list { padding: 5px 0 3px; display: flex; flex-direction: column; gap: 4px; }
.ni { position: relative; height: 31px; display: flex; align-items: center; white-space: nowrap; }
.ni.on { background: #d2e5fb; }
.ni-ic { width: 24px; flex: none; margin: 0 17px 0 21px; display: flex; justify-content: center; }
.dot { position: absolute; left: 49px; top: 0; width: 8px; height: 8px; border-radius: 50%; background: #f00; }

.col2 { width: 343px; flex: none; display: flex; flex-direction: column; gap: 6px; }
.comp { height: 388px; flex: none; }
.comp-tools { height: 34px; flex: none; box-sizing: border-box; border-bottom: 2px solid #e5e5e5; display: flex; align-items: center; padding-left: 6px; gap: 24px; }
.ct { display: flex; align-items: center; gap: 6px; color: #444; }
.ct:nth-child(2) { margin-left: -19px; }
.ct:nth-child(3) { margin-left: -13px; }
.comp-search { height: 24px; flex: none; box-sizing: border-box; border-bottom: 1px solid #ddd; display: flex; justify-content: space-between; align-items: center; padding: 0 9px 0 4px; color: #bbb; }
.comp-list { position: relative; flex: 1; padding-top: 5px; }
.ci { height: 26px; margin: 0 0 4px 51px; width: 120px; box-sizing: border-box; padding-left: 4px; line-height: 26px; border-radius: 3px; white-space: nowrap; color: #555; }
.ci.on { background: #c2d9f2; }
.ci-n { margin-left: 7px; letter-spacing: 1px; }
.sb { position: absolute; left: 329px; top: 45px; width: 10px; height: 224px; border-radius: 5px; background: #ccc; }
.prop { flex: 1; min-height: 0; }
.ptable { display: grid; grid-template-columns: 27px 133px 129px 50px; grid-template-rows: 27px 26px 26px; margin-left: 1px; }
.c { box-sizing: border-box; border-right: 1px solid #e5e5e5; border-bottom: 1px solid #e5e5e5; line-height: 25px; white-space: nowrap; color: #555; }
.mid { text-align: center; }
.hl { background: #7ab8f5; color: #fff; border-color: #7ab8f5; }
.name { color: #2f6fe0; padding-left: 4px; }
.val { border: 2px solid #6e6e6e; padding-left: 3px; line-height: 22px; color: #444; }
.expand { display: flex; align-items: center; padding-left: 3px; }
.plus { width: 15px; height: 15px; box-sizing: border-box; border: 1px solid #aaa; border-radius: 3px; margin-right: 8px; text-align: center; line-height: 12px; font-size: 13px; color: #555; }

.splitter { width: 6px; flex: none; background: #f0f0f0; }
.splitter i { display: block; margin-top: 370px; height: 124px; background: #5c6b7a; }

.stage { flex: 1; min-width: 0; display: flex; flex-direction: column; }
.stage-band { height: 34px; flex: none; background: #f0f0f0; }
.stage-tabs { height: 26px; flex: none; background: #c4c4c4; display: flex; }
.stab { width: 336px; box-sizing: border-box; background: #e4e4e4; border-right: 1px solid #888; display: flex; align-items: center; padding-left: 2px; gap: 4px; color: #444; white-space: nowrap; }
.canvas { position: relative; height: 803px; flex: none; overflow: hidden; }
.cv { display: block; }
.cad-y { fill: #fff; stroke: #ffff00; font-family: "Noto Sans CJK SC", sans-serif; }
.e36 { stroke-width: 5px; }
.e43 { stroke-width: 5.500px; }
.e46 { stroke-width: 6.200px; }
.lat { fill: #fff; font-family: Lato, "Liberation Sans", sans-serif; font-weight: 100; }
.axis { font-family: "Liberation Sans", sans-serif; }
.tip { position: absolute; left: 3px; top: 4px; width: 241px; height: 84px; box-sizing: border-box; background: #1c4770; border: 1px solid #3a7ab0; color: #fff; padding: 16px 0 0 17px; font-size: 16px; }
.tip-1 { display: flex; align-items: center; gap: 3px; white-space: nowrap; color: #f2f2f2; font-size: 16.500px; }
.tip-2 { margin: 12px 0 0 -2px; white-space: nowrap; color: #eee; }
.tip-2 em { color: #c8e000; }
.hint { position: absolute; left: 0; right: 0; bottom: 0; height: 34px; background: rgba(23, 20, 67, 0.6); display: flex; align-items: center; padding-left: 751px; gap: 2px; color: #fff; font-size: 15px; font-weight: 700; white-space: nowrap; }
.gutter { height: 4px; flex: none; background: #fff; position: relative; }
.hscroll { flex: 1; background: #e6e6e6; position: relative; }
.thumb { position: absolute; left: 954px; top: -5px; width: 126px; height: 5px; background: #5f6f85; }

.chat { position: absolute; left: 1947px; top: 885px; right: 0; bottom: 0; display: flex; flex-direction: column; border-top-left-radius: 8px; overflow: hidden; box-shadow: 0 0 22px rgba(0, 0, 0, 0.35); }
.chat-title { height: 37px; flex: none; box-sizing: border-box; background: #d7d7d7; border-bottom: 1px solid #e8e8e8; padding: 13px 0 0 14px; line-height: 24px; font-size: 17.500px; color: #555; }
.chat-body { flex: 1; background: #f2f2f2; border-left: 2px solid #6fa8dc; padding: 26px 0 0 268px; display: flex; flex-direction: column; align-items: flex-start; gap: 12px; }
.pill { width: 156px; height: 23px; flex: none; background: #d6d6d6; color: #f7f7f7; text-align: center; line-height: 23px; font-size: 15px; white-space: nowrap; }
</style>
